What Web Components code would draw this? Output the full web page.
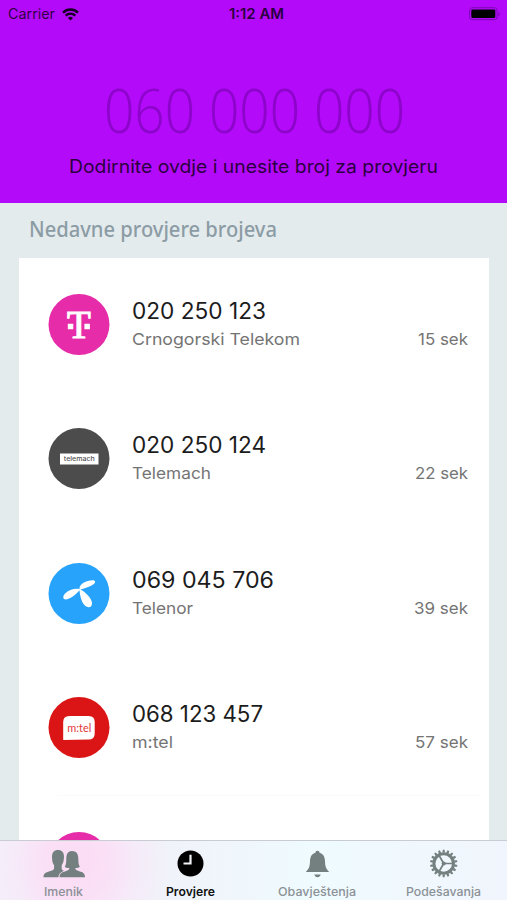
<!DOCTYPE html>
<html lang="sr-Latn-ME">
<head>
<meta charset="utf-8">
<title>Provjere</title>
<style>
html,body{margin:0;height:100%}
body{font-family:Inter,"Liberation Sans",sans-serif;background:#e4ebed;overflow:hidden}
</style>
</head>
<body>
<phone-app></phone-app>
<script>
const define=(name,render)=>customElements.define(name,class extends HTMLElement{
  connectedCallback(){
    if(this.shadowRoot)return;
    this.attachShadow({mode:'open'}).innerHTML=render(this,(k,d='')=>this.getAttribute(k)??d);
  }
});

/* One line of text set to an exact width; base is the baseline inside the box. */
define('fit-text',(el,a)=>`<style>:host{display:block;flex:none;width:${a('w')}px;height:${a('h')}px}svg{display:block;overflow:visible}</style>
<svg width="${a('w')}" height="${a('h')}"><text x="0" y="${a('base')}" textLength="${a('w')}" lengthAdjust="spacingAndGlyphs" fill="${a('color','#000')}" font-family="${a('font','Inter')}, 'Liberation Sans', sans-serif" font-size="${a('size')}" font-weight="${a('weight','400')}">${el.textContent}</text></svg>`);

define('status-bar',()=>`<style>
:host{display:grid;grid-template-columns:1fr auto 1fr;align-items:center;height:28px;padding:0 7px 0 8px;box-sizing:border-box}
.l{display:flex;align-items:center;gap:7px}.r{justify-self:end}svg{display:block}
.l fit-text{opacity:.75}.time{margin-left:5px}</style>
<div class="l"><fit-text w="47" h="16" base="13" size="14">Carrier</fit-text>
<svg width="17" height="13" viewBox="0 0 17 13" fill="none" stroke="#140020" stroke-width="2.4"><path d="M1 4.6a10.8 10.8 0 0 1 15 0M3.7 7.6a6.8 6.8 0 0 1 9.6 0"/><path d="M8.5 12.6L5.9 10a3.8 3.8 0 0 1 5.2 0z" fill="#140020" stroke="none"/></svg></div>
<fit-text class="time" w="55" h="16" base="13" size="13.8" weight="600" color="#2a0040">1:12 AM</fit-text>
<svg class="r" width="31" height="14" viewBox="0 0 31 14"><rect x=".6" y=".7" width="27.5" height="12" rx="2.8" fill="none" stroke="#7c08b4"/><rect x="2.3" y="2.4" width="24" height="8.7" rx="1.4"/><path d="M29.5 5v4q1.4-.7 1.4-2t-1.4-2z" fill="#7c08b4"/></svg>`);

define('dial-header',()=>`<style>
:host{display:flex;flex-direction:column;flex:none;height:203px;background:#b40afa}
.in{display:flex;flex-direction:column;align-items:center;padding-top:56px;gap:15px}
.in fit-text:first-child{margin-left:2px}</style>
<status-bar></status-bar>
<div class="in"><fit-text w="301" h="54" base="48.5" size="61" weight="200" color="#8d05cb" font="'Open Sans Light', 'Open Sans'">060 000 000</fit-text>
<fit-text w="369" h="24" base="19.5" size="18.3" color="#2b0040">Dodirnite ovdje i unesite broj za provjeru</fit-text></div>`);

const circle=(fill,body)=>`<circle cx="30.5" cy="30.5" r="30.5" fill="${fill}"/>${body}`;
const logos={
  magenta:circle('#e62ca8',''),
  telekom:circle('#e62ca8',`<text x="18.400" y="43.700" font-family="Liberation Serif, serif" font-weight="400" font-size="40.500" textLength="23.800" lengthAdjust="spacingAndGlyphs" fill="#fff" stroke="#fff" stroke-width="1.100">T</text><path d="M19.300 29.700h5.500v5.500h-5.500zM35.900 29.700h5.500v5.500H35.900z" fill="#fff"/>`),
  telemach:circle('#4c4c4c',`<path d="M11.500 25.500h38.500v11H11.500z" fill="#fff"/><text x="15.300" y="33.300" font-family="Inter, sans-serif" font-weight="500" font-size="6.700" textLength="31" lengthAdjust="spacingAndGlyphs" fill="#555">telemach</text>`),
  telenor:circle('#28a3fb',`<path d="M31 26C30.500 21 38 17.500 44 17.300c3.500 0 3.200 2.500 1 4C41.500 23.700 36.500 25.300 32 26.400c4.500 2.100 11 8.600 11.500 13.400.4 5.400-4.700 5.600-7.600 2.300-3.200-3.600-4.500-10-4.900-14.800-2.600 3.100-9 9.200-13.500 9.100-3.500-.1-3.400-3.600-.9-6C20 27.100 26 25 31 26z" fill="#fff"/>`),
  mtel:circle('#db1515',`<path d="M14.700 43V25q0-6 6-6h19.500q6 0 6 6v11.500q0 6-6 6z" fill="#fff"/><text x="18.800" y="34.500" font-family="Lato, sans-serif" font-weight="400" font-size="12" textLength="24" lengthAdjust="spacingAndGlyphs" fill="#df3838">m:tel</text>`)
};
define('operator-logo',(el,a)=>`<style>:host{display:block;flex:none}svg{display:block;overflow:visible}</style><svg width="61" height="61" viewBox="-.5 0 61 61">${logos[a('name')]}</svg>`);

define('check-row',(el,a)=>`<style>
:host{display:flex;box-sizing:border-box;height:134.400px;padding:36px 20.500px 0 29px}
.t{margin-left:23.400px;flex:1}.t fit-text+fit-text{margin-top:4px}.s{margin-top:34px}</style>
<operator-logo name="${a('logo')}"></operator-logo>
${a('num')?`<div class="t"><fit-text w="${a('nw')}" h="26" base="24.500" size="22.500" weight="400" color="#1c1c1c">${a('num')}</fit-text><fit-text w="${a('ow')}" h="22" base="21" size="16.500" color="#747474">${a('op')}</fit-text></div>
<fit-text class="s" w="${a('sw')}" h="22" base="17" size="16.500" color="#747474">${a('sec')}</fit-text>`:''}`);

define('check-list',()=>`<style>
:host{display:block;flex:1;min-height:0;overflow:hidden;padding:0 18.500px 0 19px;background:#e4ebed}
.h{box-sizing:border-box;padding:11px 0 0 10px;height:55px}
.c{display:flex;flex-direction:column;background:#fff}
.c check-row{flex:none}hr{width:423px;height:1px;background:#fafafa;border:0;margin:-1px 0 0 38px}</style>
<div class="h"><fit-text w="248" h="30" base="22.500" size="21.500" weight="550" font="'Noto Sans'" color="#8c9ca5">Nedavne provjere brojeva</fit-text></div>
<div class="c">
<check-row logo="telekom" num="020 250 123" nw="134" op="Crnogorski Telekom" ow="168" sec="15 sek" sw="50"></check-row>
<check-row logo="telemach" num="020 250 124" nw="134" op="Telemach" ow="79" sec="22 sek" sw="53"></check-row>
<check-row logo="telenor" num="069 045 706" nw="142" op="Telenor" ow="61" sec="39 sek" sw="54"></check-row>
<check-row logo="mtel" num="068 123 457" nw="131" op="m:tel" ow="41" sec="57 sek" sw="53"></check-row>
<hr><check-row logo="magenta"></check-row></div>`);

const teeth=Array.from({length:18},(_,i)=>`<path d="M-1.300-11h0L-.9-13.700H.9L1.300-11z" transform="rotate(${i*20})"/>`).join('');
const icons={
  people:`<g transform="translate(1.500 0)"><path d="M14.500 0c3.900 0 6 2.600 6 6.500 0 4.500-1.100 7-2.300 8.700v3.200c0 1.300 1 1.900 2.300 2.400-3.500 1.500-5.300 3.200-5.600 6.500H0c0-4 2.400-4.800 6-6 3-.9 4.600-1.600 4.600-3.100v-3C9.200 13.500 8.500 11 8.500 6.500 8.500 2.700 10.600 0 14.500 0z"/><path d="M28.500 1c4.500 0 6.300 3 6.300 7.500 0 4 .4 6.500 1.500 8.300-1.300 1-2.500 1.300-4.500 1.300 0 1.800 1.200 2.300 4 3.100 3.900 1.100 5.600 2.100 5.700 6.100H16c0-4 2.400-5 6-6 2.700-.8 3.800-1.400 3.800-3.200-2 0-3.400-.3-4.500-1.300 1.300-2 1.500-4.500 1.500-8.300C22.800 4 24.500 1 28.500 1z"/></g>`,
  clock:`<circle cx="21.500" cy="13.500" r="13"/><path d="M21.500 4.800v8.700h-7" fill="none" stroke="#f0f2f5" stroke-width="2.200"/>`,
  bell:`<path d="M21.500.8c1.400 0 2 .8 2 2 3.900 1.200 5.400 4.300 5.500 8.200.1 6 1.300 8 4.300 11H9.700c3-3 4.200-5 4.300-11 .1-3.900 1.600-7 5.500-8.200 0-1.200.6-2 2-2zM18.200 24.600h6.600c-.6 1.600-1.700 2.600-3.300 2.600s-2.700-1-3.300-2.600z"/>`,
  gear:`<g transform="translate(20.700 13.500)">${teeth}<circle r="9.800" fill="none" stroke="#73807f" stroke-width="3"/><path d="M0 0h9M0 0l-4.600-8M0 0l-4.600 8" fill="none" stroke="#73807f" stroke-width="1.700"/><circle r="2.100"/></g>`
};
define('tab-item',(el,a)=>`<style>:host{display:flex;flex:1;flex-direction:column;align-items:center;padding-top:9px;gap:3px}svg{display:block;overflow:visible}</style>
<svg width="42" height="28" viewBox="0 0 42 28" fill="${a('color','#73807f')}">${icons[a('icon')]}</svg>
<fit-text w="${a('w')}" h="17" base="15" size="12" weight="${a('weight','500')}" color="${a('ink','#8b9196')}">${el.textContent}</fit-text>`);

define('tab-bar',()=>`<style>:host{display:flex;flex:none;box-sizing:border-box;height:60px;border-top:1px solid #c9ccd2;background:radial-gradient(ellipse 95px 110px at 76px 22px,#fbdcf4 0%,#fae0f6 35%,#f8e7f8a0 65%,#f5effb00 100%),linear-gradient(90deg,#f3f0fa,#f0f3fa 35%,#effbfe 62%,#f1f5fd)}</style>
<tab-item icon="people" w="39">Imenik</tab-item>
<tab-item icon="clock" w="49" color="#000" ink="#111" weight="600">Provjere</tab-item>
<tab-item icon="bell" w="78">Obavještenja</tab-item>
<tab-item icon="gear" w="75">Podešavanja</tab-item>`);

define('phone-app',()=>`<style>:host{display:flex;flex-direction:column;width:507px;height:900px;overflow:hidden}</style>
<dial-header></dial-header><check-list></check-list><tab-bar></tab-bar>`);
</script>
</body>
</html>
